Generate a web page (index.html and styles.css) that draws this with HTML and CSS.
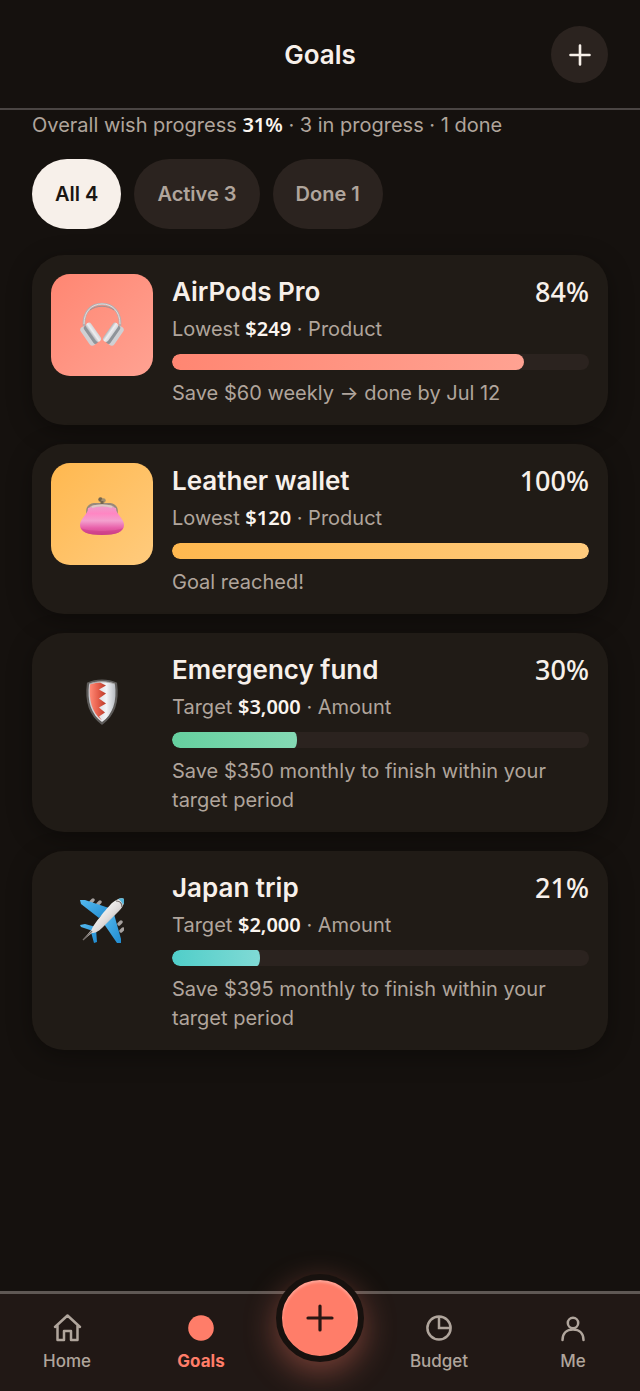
FILE: index.html
```html
<!DOCTYPE html>
<html lang="en">
<head>
<meta charset="utf-8">
<meta name="viewport" content="width=device-width, initial-scale=1">
<title>Goals</title>
<link rel="stylesheet" href="styles.css">
</head>
<body>
<div class="app">
  <header class="header">
    <h1 class="header-title">Goals</h1>
    <button class="add-button" type="button" aria-label="Add goal">
      <svg width="24" height="24" viewBox="0 0 24 24" fill="none" stroke="currentColor" stroke-width="2.6" stroke-linecap="round"><path d="M12 2.500v19M2.500 12h19"/></svg>
    </button>
  </header>
  <main class="main">
    <p class="summary">Overall wish progress <strong class="num">31%</strong> · 3 in progress · 1 done</p>
    <div class="filters">
      <button class="pill pill-active" type="button">All 4</button>
      <button class="pill" type="button">Active 3</button>
      <button class="pill" type="button">Done 1</button>
    </div>
    <section class="cards">
      <article class="card">
        <div class="thumb thumb-coral">
          <svg width="44" height="48" viewBox="0 0 44 48" fill="none">
            <defs><linearGradient id="cup" x1="0" y1="0" x2="1" y2="0"><stop offset="0" stop-color="#b4b6ba"/><stop offset=".45" stop-color="#eeeef0"/><stop offset="1" stop-color="#d4d5d8"/></linearGradient></defs>
            <path d="M4 25C3 11 11 3 22 3s19 8 18 22" stroke="#b5aeb0" stroke-width="2.6"/>
            <path d="M4 23C4 10 12 3 22 3s18 7 18 20" stroke="#e2dcdc" stroke-width="1"/>
            <path d="M10 9c7-5 17-5 24 0" stroke="#9a9293" stroke-width="1"/>
            <g transform="rotate(-35 11 33)"><rect x="4" y="22" width="7" height="22" rx="3.5" fill="#cfd0d3"/><rect x="8" y="23" width="5" height="21" rx="2.5" fill="#8f9499"/><rect x="11" y="22" width="6" height="22" rx="3" fill="url(#cup)"/></g>
            <g transform="rotate(35 33 33)"><rect x="33" y="22" width="7" height="22" rx="3.5" fill="#cfd0d3"/><rect x="31" y="23" width="5" height="21" rx="2.5" fill="#8f9499"/><rect x="27" y="22" width="6" height="22" rx="3" fill="url(#cup)"/></g>
          </svg>
        </div>
        <div class="info">
          <div class="title-row"><h2 class="title">AirPods Pro</h2><span class="percent">84%</span></div>
          <p class="meta">Lowest <strong class="num">$249</strong> · Product</p>
          <div class="track"><div class="fill fill-coral fill-round" style="width:84.3%"></div></div>
          <p class="note">Save $60 weekly → done by Jul 12</p>
        </div>
      </article>
      <article class="card">
        <div class="thumb thumb-amber">
          <svg width="44" height="48" viewBox="0 0 44 48" fill="none">
            <defs><linearGradient id="purse" x1="0" y1="0" x2="0" y2="1"><stop offset="0" stop-color="#ee9bc9"/><stop offset=".25" stop-color="#ff86c3"/><stop offset=".5" stop-color="#f3a0ce"/><stop offset=".75" stop-color="#e860aa"/><stop offset="1" stop-color="#cc4585"/></linearGradient></defs>
            <path d="M8 26c-2-7 0-11 6-12h16c6 1 8 5 6 12" fill="#cdb1ae" stroke="#98897a" stroke-width="2.2"/>
            <path d="M8 18c7-2 21-2 28 0 0 7 8 10 8 17s-8 10-22 10S0 42 0 35s8-10 8-17z" fill="url(#purse)"/>
            <path d="M1 38c7 4 35 4 42 0-2 5-10 7-21 7S3 43 1 38z" fill="#c93786" opacity=".45"/>
            <path d="M12 17c6-2 14-2 20 0" stroke="#dcc8c5" stroke-width="2"/>
            <circle cx="20.500" cy="9.500" r="2.200" fill="#74664f"/><circle cx="23.500" cy="10.500" r="2.200" fill="#a28e6c"/><path d="M22 11v3" stroke="#75664f" stroke-width="3"/>
          </svg>
        </div>
        <div class="info">
          <div class="title-row"><h2 class="title">Leather wallet</h2><span class="percent">100%</span></div>
          <p class="meta">Lowest <strong class="num">$120</strong> · Product</p>
          <div class="track"><div class="fill fill-amber fill-round" style="width:100%"></div></div>
          <p class="note">Goal reached!</p>
        </div>
      </article>
      <article class="card">
        <div class="thumb">
          <svg width="44" height="48" viewBox="0 0 44 48" fill="none">
            <defs><linearGradient id="steel" x1="0" y1="0" x2="1" y2="0"><stop offset="0" stop-color="#bfc3c9"/><stop offset=".65" stop-color="#f3f4f7"/><stop offset="1" stop-color="#b0b4ba"/></linearGradient><linearGradient id="red" x1="0" y1="0" x2="1" y2="0"><stop offset="0" stop-color="#ff8a76"/><stop offset=".5" stop-color="#e7604d"/><stop offset="1" stop-color="#b83a29"/></linearGradient></defs>
            <path d="M22 1.500c5 0 10 1 14 3 2 15 0 30-14 40C8 34.500 6 19.500 8 4.500c4-2 9-3 14-3z" fill="url(#steel)" stroke="#5d5b59" stroke-width="2.200"/>
            <path d="M20 3.500c-4 0-7 1-10 2-1 15 1 27 12 36l-3-4 6-4-6-5 7-4-7-5 7-5-7-4 7-4z" fill="url(#red)"/>
            <path d="M9 5c8-3 18-3 26 0" stroke="#a4a3a1" stroke-width="1"/>
          </svg>
        </div>
        <div class="info">
          <div class="title-row"><h2 class="title">Emergency fund</h2><span class="percent">30%</span></div>
          <p class="meta">Target <strong class="num">$3,000</strong> · Amount</p>
          <div class="track"><div class="fill fill-green" style="width:30%"></div></div>
          <p class="note">Save $350 monthly to finish within your target period</p>
        </div>
      </article>
      <article class="card">
        <div class="thumb">
          <svg width="44" height="48" viewBox="0 0 44 48" fill="none">
            <defs><linearGradient id="body" x1="0" y1="0" x2="1" y2="1"><stop offset=".3" stop-color="#fafafa"/><stop offset=".55" stop-color="#dedad9"/><stop offset=".8" stop-color="#8e8a89"/></linearGradient><linearGradient id="wing" x1="0" y1="0" x2="1" y2="1"><stop offset="0" stop-color="#55b9ee"/><stop offset="1" stop-color="#208bd0"/></linearGradient></defs>
            <path d="M11 5l2-2M18 7l2-2M39 27l2-2M41 34l2-2" stroke="#a6a19f" stroke-width="3.400" stroke-linecap="round"/>
            <path d="M0 3l5 0 24 8-10 10L1 7z" fill="url(#wing)"/>
            <path d="M24 27l10-10 7 25v4l-4 0z" fill="url(#wing)"/>
            <path d="M0 28l5-1 11 3-3 4-12-4zM11 35l5-3 1 13-3 1z" fill="url(#wing)"/>
            <path d="M3 43l9-11C13 28 27 11 32 6c5-4 10-6 12-4 1 3-1 8-5 12L22 31c-4 4-7 5-10 5z" fill="url(#body)"/>
            <path d="M38 2c3-1 5-1 6 0 1 2 0 4-1 6-1-3-3-5-5-6z" fill="#57b8dc"/><path d="M36 4c4 0 6 2 6 6" stroke="#6d6765" stroke-width="1.200"/><path d="M3 43l9-9" stroke="#77706d" stroke-width="1.500"/>
          </svg>
        </div>
        <div class="info">
          <div class="title-row"><h2 class="title">Japan trip</h2><span class="percent">21%</span></div>
          <p class="meta">Target <strong class="num">$2,000</strong> · Amount</p>
          <div class="track"><div class="fill fill-teal" style="width:21%"></div></div>
          <p class="note">Save $395 monthly to finish within your target period</p>
        </div>
      </article>
    </section>
  </main>
  <nav class="nav">
    <a class="tab" href="#home">
      <svg width="32" height="32" viewBox="0 0 32 32" fill="none" stroke="currentColor" stroke-width="2.500" stroke-linejoin="round" stroke-linecap="round"><path d="M4 15L16.500 3.500 29 15M6.500 13.500V28H13V19h7v9h6.500V13.500"/></svg>
      <span>Home</span>
    </a>
    <a class="tab tab-current" href="#goals" aria-current="page">
      <svg width="32" height="32" viewBox="0 0 32 32"><circle cx="16" cy="16" r="12.800" fill="currentColor"/></svg>
      <span>Goals</span>
    </a>
    <button class="fab" type="button" aria-label="Add">
      <svg width="30" height="30" viewBox="0 0 30 30" fill="none" stroke="currentColor" stroke-width="3.200" stroke-linecap="round"><path d="M15 3v24M3 15h24"/></svg>
    </button>
    <a class="tab tab-after" href="#budget">
      <svg width="32" height="32" viewBox="0 0 32 32" fill="none" stroke="currentColor" stroke-width="2.500"><circle cx="16" cy="16" r="11.600"/><path d="M16 4v12h12"/></svg>
      <span>Budget</span>
    </a>
    <a class="tab" href="#me">
      <svg width="32" height="32" viewBox="0 0 32 32" fill="none" stroke="currentColor" stroke-width="2.500" stroke-linecap="round"><circle cx="16" cy="11" r="5.200"/><path d="M5.500 28C5.500 21 10 17.500 16 17.500s10.500 3.500 10.500 10.500"/></svg>
      <span>Me</span>
    </a>
  </nav>
</div>
</body>
</html>
```
FILE: styles.css
```css
* { box-sizing: border-box; }
body {
  margin: 0;
  background: #15110e;
  color: #f7f0ea;
  font-family: Inter, "Noto Sans", sans-serif;
  font-size: 20px;
  line-height: 29px;
}
h1, h2, p { margin: 0; }
button { font: inherit; border: 0; padding: 0; cursor: pointer; }
svg { display: block; }
.app { min-height: 100vh; display: flex; flex-direction: column; }
.header {
  display: grid;
  grid-template-columns: 1fr auto 1fr;
  align-items: center;
  padding: 26px 32px 25px;
  border-bottom: 2px solid #4a4543;
}
.header-title { grid-column: 2; font-size: 26px; font-weight: 600; line-height: 36px; }
.add-button {
  justify-self: end;
  width: 57px;
  height: 57px;
  border-radius: 50%;
  display: grid;
  place-items: center;
  background: #2b231f;
  color: #f7f0ea;
}
.main { flex: 1; padding: 0 32px 32px; }
.summary, .meta, .note { color: #b0a59c; }
.num { color: #fbf5ef; font-family: "Noto Sans", sans-serif; font-weight: 600; }
.filters { display: flex; gap: 13px; margin: 19px 0 26px; }
.pill {
  height: 70px;
  padding: 0 23px;
  border-radius: 35px;
  background: #2b231f;
  color: #b0a59c;
  font-weight: 600;
}
.pill-active { background: #f7f0ea; color: #1b1613; }
.cards { display: grid; gap: 19px; }
.card {
  display: flex;
  align-items: flex-start;
  gap: 19px;
  padding: 19px 19px 17px;
  border-radius: 32px;
  background: #201b16;
  box-shadow: 0 6px 24px rgba(0, 0, 0, .35);
}
.thumb {
  flex: none;
  width: 102px;
  height: 102px;
  border-radius: 19px;
  display: grid;
  place-items: center;
}
.thumb-coral { background: linear-gradient(135deg, #ff8672, #ffa292); }
.thumb-amber { background: linear-gradient(135deg, #ffb84f, #ffcb7d); }
.info { flex: 1; min-width: 0; }
.title-row { display: flex; justify-content: space-between; }
.title, .percent { line-height: 36px; }
.title { font-size: 26px; font-weight: 600; }
.percent { font-family: "Noto Sans", sans-serif; font-size: 27px; font-weight: 500; }
.meta { margin: 4px 0 10px; }
.track { height: 16px; margin-bottom: 9px; border-radius: 8px; background: #2b231f; overflow: hidden; }
.fill { height: 100%; border-radius: 8px 3px 3px 8px / 8px; }
.fill-round { border-radius: 8px; }
.fill-coral { background: linear-gradient(90deg, #ff8672, #ffa292); }
.fill-amber { background: linear-gradient(90deg, #ffb84f, #ffcb7d); }
.fill-green { background: linear-gradient(90deg, #65d09f, #84d9b4); }
.fill-teal { background: linear-gradient(90deg, #50cec9, #80dad5); }
.nav {
  position: relative;
  display: grid;
  grid-template-columns: 1fr 1fr 104px 1fr 1fr;
  padding: 18px 0;
  border-top: 3px solid #5f5854;
  background: #211815;
}
.tab {
  display: flex;
  flex-direction: column;
  align-items: center;
  gap: 5px;
  color: #b0a59c;
  font-size: 17px;
  font-weight: 500;
  line-height: 24px;
  text-decoration: none;
}
.tab-current { color: #ff7d69; font-weight: 700; }
.tab-after { grid-column: 4; }
.fab {
  position: absolute;
  top: -20px;
  left: 50%;
  width: 88px;
  height: 88px;
  margin-left: -44px;
  border: 6px solid #17110e;
  border-radius: 50%;
  display: grid;
  place-items: center;
  background: #ff7d69;
  color: #2a1713;
  box-shadow: 0 10px 32px rgba(255, 125, 105, .4), inset 0 2px 3px rgba(255, 255, 255, .35);
}
```
